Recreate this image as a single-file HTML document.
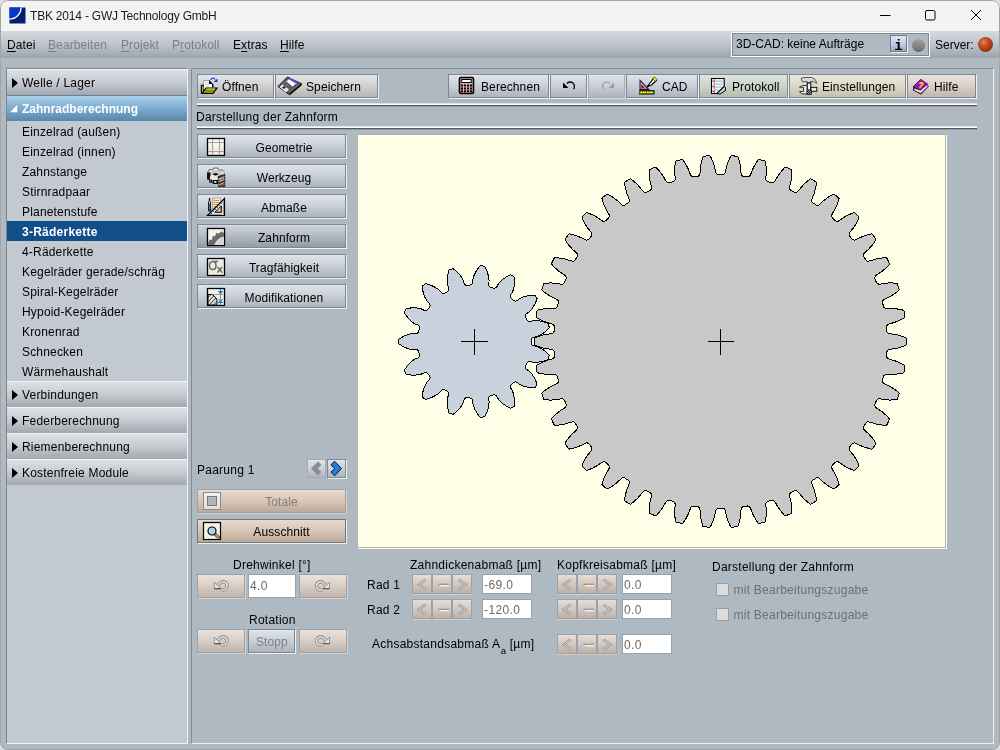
<!DOCTYPE html>
<html><head><meta charset="utf-8">
<style>
*{box-sizing:border-box;margin:0;padding:0}
html,body{width:1000px;height:750px;overflow:hidden;background:#dedede}
body{position:relative;font-family:"Liberation Sans",sans-serif;font-size:12px;color:#000}
.a{position:absolute}
#win{will-change:transform;position:absolute;left:0;top:0;width:1000px;height:750px;background:#afb9c2;border-radius:8px;overflow:hidden}
#frame{position:absolute;left:0;top:0;width:1000px;height:750px;border:1px solid #a4a4a4;border-radius:8px}
#title{position:absolute;left:0;top:0;width:1000px;height:31px;background:#f3f3f3}
#menu{position:absolute;left:0;top:31px;width:1000px;height:27px;background:linear-gradient(#d5dae0,#bdc4cb 50%,#9ca4ac)}
.mi{position:absolute;top:38px;font-size:12px;line-height:14px;letter-spacing:0.1px}
.dis{color:#7a7f86}
.u{text-decoration:underline;text-underline-offset:2px}
.etch{position:absolute}
.lp{position:absolute;left:6px;top:68px;width:182px;height:676px;background:#c3c9d1;border-left:1px solid #7d858e;border-top:1px solid #7d858e;border-right:1px solid #eef1f4;border-bottom:1px solid #eef1f4}
.hdr{position:absolute;left:7px;width:180px;height:26px;background:linear-gradient(#dde1e5,#c6cbd1 50%,#a2a7af);border-top:1px solid #f2f4f6}
.hdr .t{position:absolute;left:15px;top:6px;white-space:nowrap;letter-spacing:0.2px}
.tri{position:absolute;left:5px;top:8px;width:0;height:0;border-left:6px solid #000;border-top:5px solid transparent;border-bottom:5px solid transparent}
.item{position:absolute;left:22px;white-space:nowrap;letter-spacing:0.18px}
.mp{position:absolute;left:191px;top:68px;width:803px;height:676px;border-left:1px solid #838b94;border-top:1px solid #838b94;border-right:1px solid #eef1f4;border-bottom:1px solid #eef1f4}
.btn{position:absolute;border:1px solid #7f8892;box-shadow:1px 1px 0 #eef1f4;white-space:nowrap}
.bb{background:linear-gradient(#e8ebef 0,#dde2e8 1px,#c9cfd6 50%,#adb4bd)}
.bsel{background:linear-gradient(#dde1e6 0,#cbd1d8 1px,#b2b9c2 50%,#939ca6)}
.bg{background:linear-gradient(#e6e6e6,#d0d0d0 50%,#b5b5b5)}
.bgr{background:linear-gradient(#dfe5dd,#ccd3c9 50%,#b5bdb2)}
.by{background:linear-gradient(#ebebdc,#d9d9c6 50%,#c2c2ac)}
.bpe{background:linear-gradient(#ecdfd3 0,#e6d8cb 1px,#d8c6b7 50%,#bca897)}
.bp{background:linear-gradient(#ece3df,#dad0ca 50%,#c2b6ae)}
.bw{background:linear-gradient(#ebe3dc,#d9cec6 50%,#bfb3aa);border-color:#9aa3ad!important;box-shadow:1px 1px 0 #ddd2c8!important}
.bt{position:absolute;top:5px;white-space:nowrap;letter-spacing:0.1px}
.sep{position:absolute;height:4px;background:linear-gradient(#dfe3e7 0,#dfe3e7 1px,#fff 1px,#fff 2px,#55585c 2px,#55585c 3px,#959aa0 3px,#959aa0 4px)}
.field{position:absolute;background:#fff;border:1px solid #98a2ac;color:#6a6a6a;font-size:12px;padding-left:1px;line-height:20px;letter-spacing:0.4px}
.lbl{position:absolute;white-space:nowrap;letter-spacing:0.25px}
.sb{position:absolute;width:20px;height:20px;border:1px solid #9aa3ad;box-shadow:0 1px 0 #d8cdc3;background:linear-gradient(#e6ddd6,#d4c9c0 50%,#bdb1a7)}
.cb{position:absolute;width:13px;height:13px;background:#dcdcdc;border:1px solid #97a0a9}
</style></head><body>
<div id="win">
<!-- title bar -->
<div id="title">
 <svg class="a" style="left:8.5px;top:6.5px" width="17" height="17" viewBox="0 0 17 17">
  <rect x="0.5" y="0.5" width="16" height="16" fill="#00206e"/>
  <path d="M0.5 0.5 H12 A11.5 11.5 0 0 1 0.5 12 Z" fill="#0038c8"/>
  <path d="M12 0.5 A11.5 11.5 0 0 1 0.5 12" fill="none" stroke="#fff" stroke-width="1.4"/>
 </svg>
 <div class="a" style="left:30px;top:9px;font-size:12px;letter-spacing:-0.2px;color:#1a1a1a;white-space:nowrap">TBK 2014 - GWJ Technology GmbH</div>
 <svg class="a" style="left:870px;top:0" width="130" height="31" viewBox="0 0 130 31">
  <path d="M10 15.5 H20.5" stroke="#000" stroke-width="1"/>
  <rect x="55.5" y="10.5" width="9.5" height="9.5" rx="1.5" fill="none" stroke="#000" stroke-width="1"/>
  <path d="M101 10 L111 20 M111 10 L101 20" stroke="#000" stroke-width="1"/>
 </svg>
</div>
<!-- menu -->
<div id="menu"></div>
<div class="mi" style="left:7px"><span class="u">D</span>atei</div>
<div class="mi dis" style="left:48px"><span class="u">B</span>earbeiten</div>
<div class="mi dis" style="left:121px"><span class="u">P</span>rojekt</div>
<div class="mi dis" style="left:172px">P<span class="u">r</span>otokoll</div>
<div class="mi" style="left:233px">E<span class="u">x</span>tras</div>
<div class="mi" style="left:280px"><span class="u">H</span>ilfe</div>
<!-- status box -->
<div class="a" style="left:731px;top:32px;width:199px;height:25px;border:1px solid #fff"></div>
<div class="a" style="left:732px;top:33px;width:197px;height:23px;border:1px solid #7f8892;background:#afb9c2"></div>
<div class="a" style="left:736px;top:37px;white-space:nowrap">3D-CAD: keine Aufträge</div>
<div class="a" style="left:890px;top:35px;width:17px;height:17px;border:1px solid #6f7780;box-shadow:1px 1px 0 #eef1f4;background:linear-gradient(#e2e8f2,#c2cfe4 50%,#94a8cc)"></div>
<div class="a" style="left:892px;top:38.5px;width:13px;text-align:center;font-family:'Liberation Mono',monospace;font-weight:bold;font-size:14px;line-height:14px">i</div>
<div class="a" style="left:911.5px;top:38.5px;width:13px;height:13px;border-radius:50%;background:linear-gradient(#a2a2a2,#878787 50%,#666)"></div>
<div class="a" style="left:935px;top:38px;white-space:nowrap">Server:</div>
<div class="a" style="left:977.5px;top:36.5px;width:15px;height:15px;border-radius:50%;background:radial-gradient(circle at 38% 35%,#d98a6a 0,#c8502a 30%,#a8380f 60%,#7c2407 100%)"></div>

<!-- left panel -->
<div class="lp"></div>
<div class="hdr" style="top:69px"><div class="tri"></div><div class="t">Welle / Lager</div></div>
<div class="a" style="left:7px;top:95px;width:180px;height:26px;border-top:1px solid #64838f;background:linear-gradient(#a9d0e9,#7caccf 50%,#5787ab)"></div>
<svg class="a" style="left:10px;top:105px" width="8" height="8"><path d="M0 7.2 L7.2 7.2 L7.2 0 Z" fill="#fff"/></svg>
<div class="a" style="left:22px;top:102px;color:#fff;font-weight:bold;white-space:nowrap">Zahnradberechnung</div>
<div class="item" style="top:125px">Einzelrad (außen)</div>
<div class="item" style="top:145px">Einzelrad (innen)</div>
<div class="item" style="top:165px">Zahnstange</div>
<div class="item" style="top:185px">Stirnradpaar</div>
<div class="item" style="top:205px">Planetenstufe</div>
<div class="a" style="left:7px;top:221px;width:180px;height:20px;background:#114e8a"></div>
<div class="item" style="top:225px;color:#fff;font-weight:bold;letter-spacing:0.25px">3-Räderkette</div>
<div class="item" style="top:245px">4-Räderkette</div>
<div class="item" style="top:265px">Kegelräder gerade/schräg</div>
<div class="item" style="top:285px">Spiral-Kegelräder</div>
<div class="item" style="top:305px">Hypoid-Kegelräder</div>
<div class="item" style="top:325px">Kronenrad</div>
<div class="item" style="top:345px">Schnecken</div>
<div class="item" style="top:365px">Wärmehaushalt</div>
<div class="hdr" style="top:381px"><div class="tri"></div><div class="t">Verbindungen</div></div>
<div class="hdr" style="top:407px"><div class="tri"></div><div class="t">Federberechnung</div></div>
<div class="hdr" style="top:433px"><div class="tri"></div><div class="t">Riemenberechnung</div></div>
<div class="hdr" style="top:459px"><div class="tri"></div><div class="t">Kostenfreie Module</div></div>

<!-- main panel -->
<div class="mp"></div>
<!-- toolbar -->
<div class="btn bg" style="left:197px;top:74px;width:77px;height:24px"><div class="bt" style="left:24px">Öffnen</div></div>
<div class="btn bg" style="left:275px;top:74px;width:103px;height:24px"><div class="bt" style="left:30px">Speichern</div></div>
<div class="btn bb" style="left:448px;top:74px;width:101px;height:24px"><div class="bt" style="left:32px">Berechnen</div></div>
<div class="btn bb" style="left:550px;top:74px;width:37px;height:24px"></div>
<div class="btn bb" style="left:588px;top:74px;width:37px;height:24px;border-color:#a3acb5;box-shadow:1px 1px 0 #d9dee3"></div>
<div class="btn bb" style="left:626px;top:74px;width:72px;height:24px"><div class="bt" style="left:35px">CAD</div></div>
<div class="btn bgr" style="left:699px;top:74px;width:89px;height:24px"><div class="bt" style="left:32px">Protokoll</div></div>
<div class="btn by" style="left:789px;top:74px;width:117px;height:24px"><div class="bt" style="left:32px">Einstellungen</div></div>
<div class="btn bp" style="left:907px;top:74px;width:69px;height:24px"><div class="bt" style="left:26px">Hilfe</div></div>
<!-- toolbar icons -->
<svg class="a" style="left:198px;top:75px" width="24" height="24" viewBox="0 0 24 24">
 <path d="M5.5 5.5 H11.5 L14.5 8.5 V14.5 H5.5 Z" fill="#fff" stroke="#a0a0a0"/>
 <path d="M11 5 L15.5 9.5 V12 H14 V9 H11 Z" fill="#000"/>
 <path d="M7 7.5 H10.5 M7 9.5 H11 M7 11.5 H11" stroke="#c8c8c8"/>
 <path d="M2.8 9.8 H6 V18.5 H2.8 Z" fill="#000"/>
 <path d="M4.8 10.8 V17.8" stroke="#e6e670" stroke-width="1.1"/>
 <path d="M4 18.5 L8 13 H19 L15 18.5 Z" fill="#8f8f0a" stroke="#000" stroke-width="1.2"/>
 <path d="M8.5 14 H17" stroke="#d9d95a"/>
 <path d="M12.5 5 Q15 1.5 17.5 4.5" stroke="#2a3ae0" stroke-width="1.1" fill="none"/>
 <path d="M15.5 7 L19.5 3.5 V7 Z" fill="#1030f0"/>
</svg>
<svg class="a" style="left:276px;top:75px" width="28" height="24" viewBox="0 0 28 24">
 <path d="M2 11.5 L11.5 2 L26 9 L13.5 19.8 Z" fill="#5c5c5c" stroke="#1a0f22" stroke-width="1"/>
 <path d="M4.5 11.5 L11.5 4.5 M7 14 L14 7 M14 17 L23 9.5" stroke="#9a9a9a" stroke-width="0.8" stroke-dasharray="1 1"/>
 <path d="M10.5 6.5 L14 3.3 L21.5 7.2 L16.5 11.5 Z" fill="#fff"/>
 <path d="M13 4.2 L14 3.3 L21.5 7.2 L20 8.4 Z" fill="#3040f0"/>
 <path d="M3.5 12 L6.5 9.5 L13 14.5 L10 17.5 Z" fill="#e8e8e8"/>
 <path d="M6 12.5 L8 11 L10 12.5 L8 14 Z" fill="#222"/>
 <path d="M14 19 L25.5 9.5" stroke="#000" stroke-width="1.6"/>
</svg>
<svg class="a" style="left:452px;top:75px" width="28" height="24" viewBox="0 0 28 24">
 <rect x="7.5" y="2.5" width="14" height="16" rx="1.5" fill="#d9aab0" stroke="#000" stroke-width="1.6"/>
 <rect x="9.8" y="4.5" width="9.4" height="3" fill="#fff" stroke="#000" stroke-width="1"/>
 <g fill="#000">
  <rect x="9" y="9.5" width="2" height="2"/><rect x="12" y="9.5" width="2" height="2"/><rect x="15" y="9.5" width="2" height="2"/><rect x="18" y="9.5" width="2" height="2"/>
  <rect x="9" y="12.5" width="2" height="2"/><rect x="12" y="12.5" width="2" height="2"/><rect x="15" y="12.5" width="2" height="2"/><rect x="18" y="12.5" width="2" height="2"/>
  <rect x="9" y="15.3" width="2" height="2"/><rect x="12" y="15.3" width="2" height="2"/><rect x="15" y="15.3" width="2" height="2"/><rect x="18" y="15.3" width="2" height="2"/>
 </g>
</svg>
<svg class="a" style="left:550px;top:74px" width="76" height="25" viewBox="550 74 76 25">
 <path d="M573.5 89 A4.2 4.2 0 1 0 566.8 83.6" fill="none" stroke="#000" stroke-width="1.3"/>
 <path d="M563 82.6 V88 H568.4 Z" fill="#000"/>
 <path d="M603.5 89 A4.2 4.2 0 1 1 610.2 83.6" fill="none" stroke="#9c9c9c" stroke-width="1.2"/>
 <path d="M614 82.6 V88 H608.6 Z" fill="#9c9c9c"/>
</svg>
<svg class="a" style="left:630px;top:75px" width="30" height="24" viewBox="0 0 30 24">
 <path d="M9.5 4 V15 H20 Z" fill="#0a0a9a"/>
 <path d="M10.5 6.5 V13.7 H17.5 Z" fill="#f7a21b"/>
 <path d="M11.5 9.5 V12.7 H14.5 Z" fill="#0a0a9a"/>
 <rect x="9" y="15.2" width="15.5" height="4.3" fill="#000"/>
 <rect x="9.5" y="16.2" width="14" height="2.2" fill="#f0f000"/>
 <path d="M10.5 16.2 V17 M12.5 16.2 V17 M14.5 16.2 V17 M16.5 16.2 V17.5 M18.5 16.2 V17 M20.5 16.2 V17 M22.5 16.2 V17" stroke="#000" stroke-width="0.7"/>
 <path d="M17.5 11.5 L20 8 L24 3 L26.5 5.5 L21.5 10 Z" fill="#fff" stroke="#000" stroke-width="1.2"/>
 <path d="M22.5 3.5 L24.5 2 L27 4.5 L25.5 6.5 Z" fill="#f0f000" stroke="#222" stroke-width="0.6"/>
 <path d="M17.2 11.8 L19 10.8 L18.2 10 Z" fill="#000" stroke="#000"/>
</svg>
<svg class="a" style="left:705px;top:75px" width="30" height="24" viewBox="0 0 30 24">
 <path d="M6.5 3.5 H19.2 V11.5 L12 18.5 H6.5 Z" fill="#f4eeee" stroke="#000" stroke-width="1.1"/>
 <path d="M8 6.2 H19 M8 9.2 H19 M8 12.2 H17 M8 15.2 H14" stroke="#8fc6e8" stroke-width="1"/>
 <path d="M9.5 4 V18" stroke="#f07c7c" stroke-width="1"/>
 <path d="M8.2 5.5 V6.5 M8.2 11 V12 M8.2 16 V17" stroke="#000" stroke-width="1"/>
 <path d="M12 18.5 L19.5 11.5 L20.5 13 V15.5 L15 19 Z" fill="#d0d0d0" stroke="#000" stroke-width="1"/>
</svg>
<svg class="a" style="left:795px;top:75px" width="30" height="24" viewBox="0 0 30 24">
 <path d="M6 3.5 Q8 2 11 2.5 H16.5 Q20 3 22 7.5 L21.5 8.5 Q19.5 6.5 17 6.5 H15.5 V8 H12 V6.5 Q9 6.5 7.5 7 Z" fill="#d8d8d8" stroke="#333" stroke-width="0.8"/>
 <rect x="12.2" y="8" width="3.6" height="11" fill="#f4f4f4" stroke="#000" stroke-width="1"/>
 <path d="M4.5 12.3 Q7 10 10 10.5 H12 V19 H9 Q6 19.5 4.5 16.5 H8.5 V12.3 Z" fill="#e6e6e6" stroke="#111" stroke-width="0.8"/>
 <rect x="15.8" y="12.3" width="6" height="4" fill="#e8e8e8" stroke="#000" stroke-width="0.9"/>
 <rect x="11.8" y="14.5" width="5" height="5" fill="#000"/>
 <path d="M12.3 15 h1 v1 h-1z M14.3 15 h1 v1 h-1z M13.3 16 h1 v1 h-1z M15.3 16 h1 v1 h-1z M12.3 17 h1 v1 h-1z M14.3 17 h1 v1 h-1z M13.3 18 h1 v1 h-1z M15.3 18 h1 v1 h-1z" fill="#bbb"/>
</svg>
<svg class="a" style="left:908px;top:75px" width="30" height="24" viewBox="0 0 30 24">
 <path d="M5.2 11.3 L12.8 4 L19.5 8.8 L20.5 11.8 L13 19.5 L5.2 15.5 Z" fill="#000"/>
 <path d="M5.5 11.5 L12.8 4.3 L19.2 8.3 L12 15.2 Z" fill="#9a14b4"/>
 <path d="M6.2 13.2 L12 15.5 L19.5 9.5 L19.8 11.5 L12.7 18.3 L6.3 15.3 Z" fill="#e6e6e6"/>
 <path d="M12.3 15.5 L19.5 9 L20 12 L13 18.8" fill="none" stroke="#9a14b4" stroke-width="0.8"/>
 <path d="M11.5 8.8 Q12.5 7.5 14.3 8 Q15.7 8.8 14.2 10.2 L13 10.8 L12.4 11.6" fill="none" stroke="#f2e600" stroke-width="1.5"/>
 <rect x="11.2" y="11.8" width="1.6" height="1.4" fill="#f2e600"/>
</svg>
<div class="sep" style="left:197px;top:103px;width:780px"></div>
<div class="lbl" style="left:196px;top:110px">Darstellung der Zahnform</div>
<div class="sep" style="left:197px;top:126px;width:780px"></div>

<!-- side buttons -->
<div class="btn bb" style="left:197px;top:134px;width:149px;height:24px"><div class="bt" style="left:0;top:6px;width:147px;padding-left:25px;text-align:center">Geometrie</div></div>
<div class="btn bb" style="left:197px;top:164px;width:149px;height:24px"><div class="bt" style="left:0;top:6px;width:147px;padding-left:25px;text-align:center">Werkzeug</div></div>
<div class="btn bb" style="left:197px;top:194px;width:149px;height:24px"><div class="bt" style="left:0;top:6px;width:147px;padding-left:25px;text-align:center">Abmaße</div></div>
<div class="btn bsel" style="left:197px;top:224px;width:149px;height:24px"><div class="bt" style="left:0;top:6px;width:147px;padding-left:25px;text-align:center">Zahnform</div></div>
<div class="btn bb" style="left:197px;top:254px;width:149px;height:24px"><div class="bt" style="left:0;top:6px;width:147px;padding-left:25px;text-align:center">Tragfähigkeit</div></div>
<div class="btn bb" style="left:197px;top:284px;width:149px;height:24px"><div class="bt" style="left:0;top:6px;width:147px;padding-left:25px;text-align:center">Modifikationen</div></div>

<!-- side icons -->
<svg class="a" style="left:204px;top:134px" width="24" height="180" viewBox="204 134 24 180">
 <defs>
  <linearGradient id="cr" x1="0" y1="0" x2="0" y2="1"><stop offset="0" stop-color="#fbfbf0"/><stop offset="1" stop-color="#e6e6da"/></linearGradient>
  <pattern id="hatch" width="3" height="3" patternUnits="userSpaceOnUse" patternTransform="rotate(45)"><rect width="3" height="3" fill="#ecebe0"/><rect width="1" height="3" fill="#555"/></pattern>
 </defs>
 <!-- Geometrie -->
 <rect x="207.5" y="138.5" width="17" height="17" fill="url(#cr)" stroke="#000" stroke-width="1.3"/>
 <path d="M212.5 139 V155 M219.5 139 V155 M208 142.5 H224 M208 151.5 H224" stroke="#b09ca0" stroke-width="1"/>
 <!-- Werkzeug -->
 <path d="M207.5 173 L209 169.5 L213 169.5 L213.5 168 L218 168 L218.5 169.5 L220 170.5 L222 169.5 L224 171.5 L224.5 175 L218 177 L211 181 L207.5 179 Z" fill="#c8c8c8" stroke="#6a6a6a" stroke-width="0.9"/>
 <path d="M209.5 171 H212.5 M214 169.5 H217.5" stroke="#f0f0f0" stroke-width="1"/>
 <path d="M207 172.5 H210.5 V179.5 H207 Z" fill="#111"/>
 <path d="M210 176 Q214 174 218.5 175.5 V180.5 H210 Z" fill="#efe9dc"/>
 <ellipse cx="215.6" cy="174.3" rx="2.6" ry="1.1" fill="#000"/>
 <rect x="212.5" y="180" width="5.5" height="4" rx="1" fill="#000"/>
 <rect x="214" y="181" width="2.5" height="2" fill="#9fd2e6"/>
 <rect x="209.3" y="179.5" width="2.8" height="3.2" fill="#000"/>
 <rect x="210.2" y="180.5" width="1" height="1" fill="#e8e8e8"/>
 <path d="M220.5 170.5 L224.5 171.5 V174.5 L221 174 Z" fill="#b8dceb"/>
 <path d="M218 176.5 L224.8 174.5 V186.5 H218.5 Z" fill="#1c2c90" stroke="#000" stroke-width="0.6"/>
 <path d="M218.3 179 L224.5 176.5 M218.3 182 L224.5 179.5 M218.5 185 L224.5 182.5" stroke="#f2b428" stroke-width="1.3"/>
 <path d="M219 180.2 L224 178.2" stroke="#f4f4f4" stroke-width="0.7"/>
 <path d="M220.5 186 L224.5 184.3" stroke="#e84a10" stroke-width="1.2"/>
 <!-- Abmasse -->
 <rect x="212.5" y="198" width="8" height="14" fill="#f3eedc" stroke="#c8a0a0" stroke-width="1"/>
 <path d="M213.5 200.5 H219 M213.5 202.5 H219 M213.5 204.5 H219 M213.5 206.5 H219 M213.5 208.5 H219 M213.5 210.5 H219" stroke="#b87858" stroke-width="0.8"/>
 <path d="M214.3 199 V211" stroke="#f0c040" stroke-width="1"/>
 <path d="M208.5 201.5 H210.5 V211 H208.5 Z" fill="#1a78d0" stroke="#000" stroke-width="0.8"/>
 <path d="M209.5 198 V201" stroke="#000" stroke-width="1.2"/><rect x="209" y="201" width="1.2" height="2.5" fill="#f0c040"/>
 <path d="M207.5 215.5 L224.5 198.5 V215.5 Z M215 212.3 H221.3 V206 Z" fill="#e6e4d8" fill-rule="evenodd"/>
 <path d="M211 214 L223.2 201.8" stroke="#000" stroke-width="1" stroke-dasharray="1 1.8"/>
 <path d="M215 212.3 H221.3 V206 Z" fill="none" stroke="#000" stroke-width="1"/>
 <path d="M207.5 215.5 L224.5 198.5 V215.5 Z" fill="none" stroke="#000" stroke-width="1.2"/>
 <path d="M209 215.5 V214.3 M211 215.5 V214.3 M213 215.5 V214.3 M215 215.5 V214.3 M217 215.5 V214.3 M219 215.5 V214.3 M221 215.5 V214.3 M224.5 213 H223.3 M224.5 211 H223.3 M224.5 209 H223.3 M224.5 207 H223.3 M224.5 205 H223.3 M224.5 203 H223.3" stroke="#000" stroke-width="0.9"/>
 <!-- Zahnform -->
 <rect x="207.5" y="228.5" width="17" height="17" fill="#f5f5ec" stroke="#000" stroke-width="1.3"/>
 <path d="M208.2 245 V242.5 L209.8 239.5 L211.8 240 L212.8 235.8 L214.8 236.5 L216.5 232.8 L218.5 233.8 L221.5 231 L222.5 232.8 L224 232.2 V236.8 Q217.5 237.5 214.5 245 Z" fill="#6a6a6a"/>
 <path d="M214.5 245 Q217.5 237.5 224 236.8 V245 Z" fill="#d3d6dc"/>
 <!-- Tragfaehigkeit -->
 <rect x="207.5" y="258.5" width="17" height="17" fill="#ecebe0" stroke="#000" stroke-width="1.3"/>
 <path d="M218 261.5 H213 Q209.5 262 209.5 265.5 Q209.5 269.5 213 269.5 Q216 269.5 216 265.5 Q216 262 213.5 261.5" fill="none" stroke="#666" stroke-width="1.4"/>
 <path d="M217.5 267 L222 272.5 M222 267 L217.5 272.5" stroke="#666" stroke-width="1.4"/>
 <!-- Modifikationen -->
 <rect x="207.5" y="288.5" width="17" height="17" fill="#f3f3e6" stroke="#000" stroke-width="1.3"/>
 <path d="M208 294.5 H211.5 Q213 294.5 214 296 L216 298 Q217 299 217 300.5 V305 H208 Z" fill="url(#hatch)" stroke="#000" stroke-width="1"/>
 <path d="M213 294.5 H223 M217 299.5 H223 M220.5 294.5 V299.5" stroke="#8a8a8a" stroke-width="0.8"/>
 <path d="M220.5 289 V294 M218.5 291.5 L220.5 294 L222.5 291.5 Z M220.5 305 V300 M218.5 302.5 L220.5 300 L222.5 302.5 Z" stroke="#1a80e0" fill="#1a80e0" stroke-width="1"/>
</svg>
<div class="lbl" style="left:197px;top:463px">Paarung 1</div>
<div class="btn bb" style="left:307px;top:459px;width:19px;height:19px;border-color:#a3acb5;box-shadow:none"></div>
<div class="btn bb" style="left:327px;top:459px;width:19px;height:19px"></div>
<div class="btn bpe" style="left:197px;top:489px;width:149px;height:24px;border-color:#9aa3ad;box-shadow:1px 1px 0 #e3cebd"><div class="bt" style="left:0;width:147px;padding-left:20px;text-align:center;color:#808080">Totale</div></div>
<div class="btn bpe" style="left:197px;top:519px;width:149px;height:24px;border-color:#6f7780"><div class="bt" style="left:0;width:147px;padding-left:20px;text-align:center">Ausschnitt</div></div>

<svg class="a" style="left:300px;top:454px" width="50" height="30" viewBox="300 454 50 30">
 <path d="M311 468.5 L318 461.5 L321.5 465 L317.8 468.5 L321.5 472 L318 475.5 Z" fill="#8c8c8c"/>
 <path d="M331 464.8 L334.6 461.2 L341.5 468.5 L334.6 475.8 L331 472.2 L334.8 468.5 Z" fill="#1f7ee0" stroke="#000" stroke-width="0.9"/>
</svg>
<svg class="a" style="left:200px;top:488px" width="26" height="56" viewBox="200 488 26 56">
 <defs><linearGradient id="wg" x1="0" y1="0" x2="0" y2="1"><stop offset="0" stop-color="#f2f2f2"/><stop offset="1" stop-color="#e0e0e0"/></linearGradient></defs>
 <rect x="203.5" y="492.5" width="17" height="17" fill="url(#wg)" stroke="#8a8a8a" stroke-width="1"/>
 <rect x="207.5" y="496.5" width="9" height="9" fill="#b4b4b4" stroke="#7a7a7a" stroke-width="1"/>
 <rect x="203.5" y="522.5" width="17" height="17" fill="#f2f2e4" stroke="#000" stroke-width="1.2"/>
 <path d="M215 534 L219.3 538.3" stroke="#000" stroke-width="2.8"/>
 <path d="M215.4 534.4 L219.2 538.2" stroke="#f2b070" stroke-width="1.5"/>
 <circle cx="212" cy="531" r="4" fill="#a8d0f0" stroke="#000" stroke-width="1.2"/>
</svg>
<!-- canvas -->
<div class="a" style="left:357px;top:134px;width:589px;height:414px;border:1px solid #b5b59b;box-shadow:1px 1px 0 #fff;background:#fffee6"></div>
<div class="a" style="left:358px;top:135px;width:1px;height:412px;background:#fff"></div>
<div class="a" style="left:358px;top:135px;width:587px;height:1px;background:#fff"></div>
<svg class="a" style="left:0;top:0" width="1000" height="750" viewBox="0 0 1000 750" shape-rendering="crispEdges">
 <path d="M535.41 345.45 L534.75 344.94 L534.47 344.15 L534.47 338.85 L534.60 338.32 L534.92 337.87 L535.37 337.56 L538.05 336.55 L542.69 335.11 L546.59 334.26 L550.97 333.71 L552.66 333.19 L553.55 332.44 L554.09 331.41 L554.47 327.21 L554.39 326.39 L554.07 325.59 L553.56 324.94 L552.87 324.43 L551.28 323.79 L547.17 322.65 L544.20 321.52 L540.21 319.65 L536.62 317.62 L536.25 317.08 L536.15 316.43 L537.08 310.77 L537.47 310.29 L538.03 310.02 L544.25 308.85 L549.05 308.43 L554.16 308.53 L555.84 308.24 L556.77 307.64 L557.46 306.70 L558.48 302.46 L558.48 301.65 L558.26 300.88 L557.85 300.19 L557.28 299.63 L555.81 298.77 L551.92 297.03 L549.14 295.47 L545.48 293.02 L542.23 290.48 L541.95 289.89 L541.94 289.24 L543.56 284.03 L544.01 283.47 L544.68 283.18 L550.31 282.94 L554.80 283.14 L560.69 284.08 L562.65 284.06 L563.71 283.58 L564.49 282.74 L566.16 278.53 L566.09 277.03 L565.32 275.75 L564.02 274.70 L560.46 272.42 L557.96 270.47 L554.75 267.57 L551.85 264.51 L551.64 263.89 L551.71 263.24 L554.01 258.46 L554.54 257.87 L555.30 257.63 L560.62 258.18 L565.63 259.16 L570.84 260.84 L572.53 261.18 L573.33 261.13 L574.14 260.83 L574.79 260.36 L575.29 259.73 L577.33 256.04 L577.45 254.94 L577.13 253.81 L576.03 252.43 L572.75 249.54 L570.06 246.70 L567.14 243.05 L565.14 240.03 L565.10 239.45 L565.30 238.90 L568.24 234.57 L568.70 234.15 L569.21 233.96 L569.79 233.97 L576.13 235.70 L580.45 237.35 L584.92 239.61 L586.64 240.09 L587.81 239.91 L588.81 239.31 L591.34 236.20 L591.76 235.44 L591.94 234.09 L591.51 232.78 L590.61 231.48 L588.04 228.46 L586.25 225.92 L584.11 222.38 L582.12 218.47 L581.99 217.86 L582.11 217.25 L583.32 215.81 L586.04 212.93 L586.67 212.64 L587.33 212.65 L591.35 214.32 L595.13 216.21 L597.85 217.84 L601.09 220.20 L602.46 221.00 L603.79 221.33 L605.13 221.04 L605.84 220.57 L608.77 217.80 L609.29 216.76 L609.37 215.60 L608.77 213.93 L606.18 209.62 L604.20 205.44 L602.01 199.25 L601.95 198.71 L602.11 198.14 L602.49 197.66 L606.58 194.40 L607.12 194.17 L607.70 194.15 L610.86 195.92 L614.72 198.56 L617.75 201.04 L620.88 204.10 L622.35 205.09 L623.49 205.32 L624.63 205.10 L628.11 202.81 L628.70 202.26 L629.12 201.58 L629.35 200.75 L629.35 199.95 L628.88 198.26 L626.83 193.26 L625.49 188.41 L624.52 183.03 L624.70 182.25 L625.22 181.70 L629.85 179.03 L630.49 178.91 L631.13 179.07 L634.39 181.73 L637.52 184.72 L639.65 187.07 L642.19 190.44 L643.34 191.66 L644.67 192.34 L646.19 192.29 L650.25 190.32 L651.03 189.46 L651.43 188.38 L651.29 186.42 L649.92 180.66 L649.39 176.25 L649.21 170.53 L649.42 169.88 L649.94 169.36 L655.04 167.35 L655.69 167.30 L656.30 167.54 L659.10 170.61 L661.79 174.06 L663.55 176.71 L665.58 180.47 L666.56 181.87 L667.21 182.44 L668.01 182.80 L668.88 182.91 L669.69 182.79 L673.68 181.48 L674.55 180.70 L675.05 179.71 L675.18 177.94 L674.74 173.59 L674.70 169.68 L675.04 165.02 L675.63 161.44 L676.00 160.99 L676.52 160.72 L682.16 159.54 L682.71 159.74 L683.14 160.14 L686.58 165.65 L688.66 169.86 L690.42 174.59 L691.30 176.06 L692.25 176.75 L693.33 177.01 L697.63 176.42 L698.38 176.13 L699.03 175.65 L699.53 175.02 L699.84 174.26 L700.11 172.58 L700.31 168.36 L700.74 165.22 L701.65 160.99 L702.84 156.95 L703.28 156.46 L703.88 156.20 L709.24 155.79 L709.98 155.98 L710.54 156.50 L712.81 161.60 L714.41 166.33 L715.51 171.51 L716.04 173.14 L716.96 174.26 L718.29 174.83 L722.80 174.81 L723.87 174.38 L724.70 173.57 L725.43 171.75 L726.70 165.97 L728.13 161.76 L730.45 156.53 L730.95 156.01 L731.61 155.80 L737.08 156.19 L737.69 156.44 L738.14 156.92 L739.33 160.89 L740.25 165.17 L740.69 168.32 L740.89 172.59 L741.17 174.28 L741.51 175.07 L742.07 175.74 L742.80 176.22 L743.58 176.46 L747.75 177.01 L748.82 176.71 L749.75 176.01 L750.64 174.48 L752.13 170.37 L753.79 166.82 L756.12 162.77 L758.20 159.80 L758.73 159.56 L759.31 159.54 L764.91 160.93 L765.32 161.35 L765.53 161.89 L766.24 168.40 L766.28 173.08 L765.81 178.05 L765.96 179.73 L766.50 180.76 L767.37 181.50 L771.52 182.84 L772.33 182.91 L773.12 182.76 L773.84 182.40 L774.45 181.86 L775.42 180.46 L777.43 176.75 L779.12 174.18 L781.68 170.88 L784.55 167.66 L785.13 167.34 L785.78 167.31 L788.52 168.32 L791.13 169.40 L791.58 169.88 L791.79 170.50 L791.70 174.84 L791.33 178.97 L790.83 182.00 L789.78 186.08 L789.54 187.78 L789.61 188.60 L789.90 189.35 L790.38 189.99 L791.01 190.49 L794.95 192.33 L796.06 192.39 L797.16 192.02 L798.46 190.86 L801.52 186.87 L804.74 183.46 L809.66 179.21 L810.18 178.96 L810.77 178.92 L815.81 181.72 L816.23 182.13 L816.45 182.67 L815.96 186.26 L814.91 190.81 L813.72 194.54 L812.01 198.57 L811.62 200.30 L811.81 201.39 L812.41 202.39 L815.84 204.82 L816.58 205.17 L817.42 205.32 L818.29 205.21 L819.05 204.89 L820.42 203.83 L823.52 200.79 L825.96 198.81 L829.57 196.29 L833.12 194.20 L833.77 194.15 L834.39 194.38 L838.67 197.81 L839.01 198.45 L839.02 199.14 L837.16 204.55 L835.35 208.61 L832.35 213.70 L831.64 215.54 L831.70 216.71 L832.19 217.74 L835.49 220.82 L836.85 221.32 L838.29 221.11 L839.79 220.28 L844.11 217.24 L848.50 214.86 L853.64 212.66 L854.40 212.65 L855.07 213.02 L858.72 216.97 L858.98 217.57 L858.97 218.22 L857.10 221.99 L854.89 225.72 L853.07 228.31 L850.35 231.53 L849.40 232.96 L849.11 233.73 L849.05 234.53 L849.19 235.32 L849.55 236.04 L852.30 239.41 L853.27 239.94 L854.43 240.09 L856.10 239.60 L860.59 237.33 L864.97 235.66 L871.24 233.96 L871.83 233.96 L872.37 234.19 L875.70 238.90 L875.90 239.45 L875.86 240.03 L873.86 243.05 L870.94 246.70 L868.25 249.54 L864.96 252.43 L863.86 253.82 L863.55 254.88 L863.67 256.04 L865.70 259.72 L866.21 260.36 L866.93 260.87 L867.74 261.14 L868.56 261.18 L870.26 260.82 L874.37 259.43 L877.43 258.69 L881.77 257.99 L885.88 257.65 L886.49 257.89 L886.94 258.36 L889.31 263.31 L889.34 264.04 L889.05 264.67 L885.03 268.73 L881.63 271.60 L876.71 274.89 L875.28 276.24 L874.84 277.30 L874.83 278.46 L876.46 282.67 L877.54 283.74 L878.98 284.14 L880.65 284.03 L884.80 283.29 L887.96 283.01 L892.29 282.96 L896.49 283.22 L897.07 283.53 L897.46 284.06 L899.04 289.16 L899.03 289.96 L898.64 290.62 L894.28 293.90 L889.99 296.54 L885.07 298.83 L883.60 299.73 L883.05 300.32 L882.68 301.03 L882.50 301.87 L882.56 302.67 L883.58 306.77 L884.24 307.66 L885.24 308.26 L886.99 308.53 L891.36 308.42 L895.26 308.67 L899.88 309.36 L903.41 310.21 L903.83 310.62 L904.06 311.15 L904.84 316.32 L904.80 316.94 L904.55 317.43 L904.11 317.82 L898.25 320.89 L893.97 322.60 L889.20 323.97 L887.64 324.76 L886.90 325.66 L886.54 326.82 L886.80 330.83 L887.01 331.69 L887.81 332.81 L889.05 333.47 L896.79 334.73 L900.22 335.65 L903.83 336.87 L905.94 337.75 L906.37 338.25 L906.53 338.92 L906.53 344.22 L906.31 344.84 L905.85 345.31 L901.92 346.81 L897.76 348.03 L894.67 348.70 L890.48 349.21 L888.85 349.59 L887.59 350.41 L886.87 351.75 L886.55 356.25 L886.91 357.36 L887.64 358.24 L889.41 359.11 L895.08 360.80 L899.16 362.54 L904.21 365.24 L904.69 365.79 L904.86 366.46 L904.05 371.88 L903.76 372.47 L903.25 372.88 L899.19 373.77 L894.86 374.37 L891.69 374.57 L887.42 374.46 L885.71 374.60 L884.90 374.88 L884.19 375.39 L883.65 376.09 L883.35 376.85 L882.50 380.96 L882.73 382.11 L883.34 383.03 L884.80 384.03 L888.79 385.83 L892.20 387.75 L896.07 390.37 L898.87 392.67 L899.07 393.22 L899.05 393.80 L897.25 399.28 L896.80 399.65 L896.24 399.83 L889.70 400.05 L885.03 399.74 L880.10 398.90 L878.42 398.92 L877.37 399.37 L876.55 400.20 L874.90 404.24 L874.78 405.03 L874.87 405.83 L875.17 406.58 L875.66 407.23 L876.98 408.30 L880.54 410.58 L883.04 412.53 L886.25 415.43 L889.15 418.49 L889.36 419.11 L889.29 419.76 L886.98 424.57 L886.46 425.13 L885.70 425.37 L880.26 424.80 L875.33 423.83 L870.16 422.16 L868.47 421.82 L867.67 421.87 L866.91 422.14 L866.21 422.64 L865.71 423.27 L863.67 426.96 L863.55 428.12 L863.87 429.19 L864.97 430.57 L868.25 433.46 L870.94 436.30 L873.86 439.95 L875.86 442.97 L875.90 443.55 L875.70 444.10 L872.76 448.43 L872.30 448.85 L871.79 449.04 L871.21 449.03 L864.82 447.29 L860.52 445.63 L856.09 443.39 L854.41 442.91 L853.25 443.06 L852.20 443.68 L849.66 446.80 L849.24 447.55 L849.06 448.91 L849.49 450.20 L850.39 451.52 L852.98 454.57 L854.80 457.16 L856.96 460.76 L858.93 464.64 L859.01 465.29 L858.80 465.91 L856.86 468.08 L854.90 470.12 L854.26 470.37 L853.60 470.33 L849.54 468.63 L845.83 466.76 L843.15 465.16 L839.91 462.80 L838.54 462.00 L837.21 461.67 L835.87 461.96 L835.16 462.43 L832.23 465.20 L831.71 466.24 L831.63 467.40 L832.23 469.07 L834.82 473.38 L836.80 477.56 L838.99 483.75 L839.05 484.29 L838.89 484.86 L838.51 485.34 L834.42 488.60 L833.88 488.83 L833.30 488.85 L830.14 487.08 L826.28 484.44 L823.25 481.96 L820.13 478.91 L818.65 477.91 L817.51 477.68 L816.42 477.88 L812.89 480.19 L812.30 480.74 L811.88 481.42 L811.66 482.19 L811.65 483.05 L812.12 484.74 L814.17 489.74 L815.51 494.59 L816.48 499.97 L816.32 500.71 L815.78 501.30 L811.15 503.97 L810.51 504.09 L809.87 503.93 L806.61 501.27 L803.48 498.28 L801.35 495.93 L798.81 492.56 L797.66 491.34 L796.33 490.66 L794.81 490.71 L790.75 492.68 L789.98 493.53 L789.57 494.62 L789.71 496.58 L791.08 502.34 L791.61 506.75 L791.79 512.47 L791.58 513.12 L791.06 513.64 L785.96 515.65 L785.31 515.70 L784.70 515.46 L781.90 512.39 L779.21 508.94 L777.45 506.29 L775.42 502.53 L774.44 501.13 L773.79 500.56 L772.99 500.20 L772.12 500.09 L771.31 500.21 L767.32 501.52 L766.45 502.30 L765.95 503.29 L765.82 505.06 L766.26 509.41 L766.30 513.32 L765.96 517.98 L765.37 521.56 L765.00 522.01 L764.48 522.28 L758.84 523.46 L758.29 523.26 L757.86 522.86 L754.39 517.30 L752.33 513.11 L750.59 508.42 L749.73 506.97 L748.80 506.28 L747.69 505.99 L743.37 506.58 L742.62 506.87 L741.97 507.35 L741.47 507.98 L741.16 508.74 L740.89 510.42 L740.69 514.64 L740.26 517.78 L739.35 522.01 L738.16 526.05 L737.72 526.54 L737.12 526.80 L731.76 527.21 L731.02 527.02 L730.46 526.50 L728.19 521.40 L726.59 516.67 L725.49 511.49 L724.96 509.88 L724.23 508.89 L723.15 508.28 L722.29 508.14 L718.29 508.17 L717.20 508.58 L716.33 509.38 L715.63 511.01 L714.61 515.93 L713.21 520.34 L710.61 526.37 L710.25 526.84 L709.78 527.12 L709.17 527.21 L703.95 526.81 L703.40 526.62 L702.96 526.24 L701.85 522.79 L700.82 518.23 L700.28 514.35 L700.07 509.98 L699.67 508.25 L698.99 507.31 L698.00 506.70 L693.89 506.01 L693.09 506.01 L692.26 506.25 L691.58 506.67 L691.04 507.26 L690.24 508.82 L688.33 513.88 L686.02 518.35 L683.07 522.95 L682.41 523.40 L681.65 523.45 L676.45 522.26 L675.89 521.91 L675.54 521.36 L674.96 517.19 L674.69 512.87 L674.73 509.70 L675.16 505.52 L675.15 503.84 L674.63 502.41 L673.48 501.42 L669.17 500.11 L668.02 500.20 L666.99 500.73 L665.75 502.26 L662.84 507.41 L660.23 511.00 L656.48 515.32 L655.84 515.67 L655.15 515.68 L650.03 513.69 L649.52 513.27 L649.24 512.68 L649.28 508.53 L649.65 504.17 L650.16 501.03 L651.23 496.90 L651.46 495.20 L651.37 494.35 L651.03 493.54 L650.48 492.87 L649.80 492.40 L645.98 490.65 L644.81 490.63 L643.77 491.02 L642.47 492.22 L639.84 495.71 L637.21 498.61 L633.79 501.79 L630.92 504.01 L630.34 504.09 L629.78 503.93 L624.84 500.96 L624.57 500.44 L624.53 499.86 L625.75 493.48 L627.09 488.98 L629.03 484.31 L629.38 482.63 L629.15 481.49 L628.54 480.56 L624.98 478.07 L624.23 477.77 L623.43 477.68 L622.64 477.81 L621.90 478.15 L620.55 479.20 L617.54 482.16 L615.08 484.16 L611.54 486.64 L607.92 488.79 L607.26 488.86 L606.65 488.64 L602.44 485.29 L602.02 484.65 L601.97 483.89 L603.78 478.61 L605.82 474.05 L608.55 469.49 L609.25 467.96 L609.35 466.51 L608.75 465.18 L605.44 462.13 L604.36 461.71 L603.20 461.74 L601.42 462.58 L596.57 465.96 L592.65 468.07 L587.40 470.33 L586.67 470.36 L586.04 470.07 L582.30 466.06 L582.02 465.47 L582.02 464.81 L583.84 461.12 L586.09 457.33 L587.89 454.75 L590.67 451.44 L591.64 449.98 L591.91 449.15 L591.94 448.33 L591.74 447.49 L591.32 446.78 L588.64 443.55 L587.60 443.02 L586.50 442.92 L584.81 443.44 L580.92 445.44 L577.29 446.91 L572.83 448.29 L569.28 449.05 L568.73 448.87 L568.29 448.49 L565.12 443.66 L565.11 443.08 L565.32 442.53 L569.23 437.28 L572.38 433.82 L576.11 430.49 L577.14 429.16 L577.45 428.06 L577.32 426.91 L575.18 423.10 L574.64 422.51 L573.96 422.08 L573.19 421.85 L572.37 421.83 L570.71 422.19 L566.71 423.55 L563.72 424.28 L559.57 424.97 L555.27 425.37 L554.64 425.19 L554.14 424.76 L552.73 421.93 L551.66 419.58 L551.67 418.93 L551.95 418.33 L554.99 415.19 L558.07 412.43 L560.49 410.56 L564.01 408.31 L565.31 407.25 L566.09 405.97 L566.16 404.45 L564.49 400.26 L563.69 399.41 L562.65 398.94 L560.68 398.92 L554.88 399.86 L550.49 400.06 L544.68 399.82 L544.04 399.56 L543.59 399.04 L541.94 393.76 L541.95 393.11 L542.23 392.52 L545.48 389.98 L549.14 387.54 L551.88 385.99 L555.83 384.22 L557.33 383.32 L557.91 382.74 L558.32 381.99 L558.50 381.13 L558.44 380.31 L557.42 376.23 L556.72 375.30 L555.76 374.74 L554.01 374.47 L549.64 374.58 L545.74 374.33 L541.12 373.64 L537.59 372.79 L537.17 372.38 L536.94 371.85 L536.18 366.13 L536.43 365.60 L536.85 365.20 L542.61 362.18 L546.96 360.43 L551.81 359.03 L553.34 358.25 L554.07 357.41 L554.44 356.31 L554.17 351.97 L553.94 351.20 L553.51 350.52 L552.92 349.98 L552.19 349.61 L550.53 349.21 L546.37 348.70 L543.43 348.08 L539.50 346.94 L535.41 345.45Z" fill="#c8c8c8" stroke="#000" stroke-width="1"/>
 <path d="M399.15 344.09 L398.66 343.55 L398.49 342.83 L398.51 339.94 L398.70 339.39 L399.06 338.98 L403.70 336.22 L408.31 334.30 L412.13 333.42 L413.75 333.31 L416.08 333.46 L417.29 333.13 L418.11 332.51 L418.67 331.66 L419.44 328.31 L419.35 326.84 L418.58 325.60 L417.71 325.01 L414.75 323.81 L412.06 321.97 L409.01 319.08 L406.13 315.51 L404.59 313.18 L404.39 312.52 L404.49 311.88 L405.75 309.11 L406.50 308.54 L408.46 308.21 L411.71 307.89 L414.79 307.85 L417.69 308.09 L420.30 308.61 L422.07 309.19 L424.00 310.22 L424.97 310.55 L426.28 310.48 L427.44 309.85 L429.77 306.72 L430.07 305.75 L430.03 304.72 L429.47 303.50 L427.70 301.76 L426.56 300.26 L425.50 298.44 L424.54 296.38 L423.52 293.53 L422.71 290.39 L422.15 287.16 L422.36 286.25 L424.81 283.98 L425.38 283.75 L425.97 283.76 L431.10 285.37 L435.59 287.52 L438.77 289.74 L439.94 290.87 L441.39 292.71 L442.44 293.39 L443.43 293.58 L444.40 293.44 L447.40 291.79 L448.46 290.76 L448.90 289.30 L448.75 288.26 L447.66 285.23 L447.23 281.97 L447.35 277.74 L448.09 273.19 L448.76 270.60 L449.15 269.98 L449.67 269.65 L452.61 268.73 L453.52 268.93 L455.19 270.26 L457.54 272.42 L459.58 274.64 L461.33 276.96 L462.68 279.22 L463.42 280.91 L463.95 283.04 L464.36 283.99 L465.28 284.91 L466.53 285.35 L470.41 284.99 L471.34 284.56 L472.08 283.84 L472.60 282.61 L472.71 280.13 L473.07 278.28 L473.71 276.27 L474.60 274.18 L476.04 271.51 L477.82 268.81 L479.85 266.23 L480.67 265.78 L483.99 266.09 L484.52 266.33 L484.93 266.80 L487.18 271.69 L488.58 276.46 L489.06 280.31 L489.00 281.94 L488.60 284.24 L488.80 285.48 L489.32 286.35 L490.07 286.97 L493.32 288.11 L494.79 288.20 L496.16 287.55 L496.84 286.74 L498.31 283.96 L500.36 281.54 L503.46 278.85 L507.20 276.39 L509.94 274.95 L510.57 274.80 L511.25 274.95 L513.70 276.36 L514.29 277.04 L514.46 278.10 L514.52 281.83 L514.25 285.32 L513.71 288.28 L512.93 290.90 L512.14 292.68 L510.86 294.59 L510.44 295.53 L510.39 296.80 L510.89 298.00 L513.76 300.65 L514.70 301.05 L515.73 301.12 L517.00 300.68 L518.92 299.11 L520.52 298.14 L522.44 297.27 L524.60 296.53 L527.54 295.81 L530.74 295.33 L534.01 295.11 L534.90 295.42 L536.90 298.09 L537.07 298.69 L537.00 299.27 L534.86 304.21 L532.26 308.45 L529.71 311.37 L528.46 312.42 L526.49 313.67 L525.70 314.64 L525.41 315.61 L525.44 316.59 L526.77 319.76 L527.73 320.94 L529.09 321.50 L530.14 321.46 L533.23 320.69 L536.43 320.60 L540.56 321.13 L544.92 322.29 L547.70 323.32 L548.23 323.70 L548.55 324.32 L549.15 327.15 L548.94 328.10 L547.97 329.16 L545.38 331.52 L542.73 333.52 L540.22 335.07 L537.77 336.22 L535.96 336.80 L533.69 337.13 L532.71 337.45 L531.70 338.31 L531.17 339.46 L531.13 343.34 L531.46 344.32 L532.09 345.12 L533.27 345.77 L535.73 346.14 L537.52 346.68 L539.42 347.52 L541.41 348.62 L543.87 350.29 L546.32 352.29 L548.79 354.69 L549.15 355.52 L548.52 358.79 L548.21 359.32 L547.70 359.68 L542.60 361.40 L537.71 362.31 L533.83 362.37 L532.22 362.14 L529.97 361.51 L528.72 361.58 L527.80 362.01 L527.10 362.68 L525.63 365.80 L525.41 366.56 L525.40 367.32 L525.94 368.75 L526.66 369.47 L529.10 371.08 L531.07 373.06 L533.28 376.05 L535.26 379.58 L537.07 384.09 L536.90 384.91 L535.72 386.57 L534.93 387.55 L534.12 387.88 L531.08 387.70 L528.07 387.29 L524.57 386.46 L521.48 385.33 L519.35 384.19 L517.24 382.49 L516.32 382.00 L515.57 381.87 L514.78 381.93 L513.45 382.59 L510.93 384.94 L510.47 385.86 L510.35 386.87 L510.68 388.08 L511.96 390.01 L512.68 391.46 L513.82 395.18 L514.47 400.12 L514.41 405.50 L514.23 406.09 L513.82 406.55 L510.90 408.17 L510.00 408.08 L506.96 406.47 L504.29 404.76 L501.95 402.94 L500.29 401.39 L498.89 399.81 L497.83 398.28 L496.71 396.06 L495.75 395.16 L494.78 394.80 L493.81 394.78 L490.12 396.00 L489.15 396.88 L488.64 398.10 L488.63 399.11 L489.04 401.54 L488.99 403.79 L488.52 406.83 L487.61 410.09 L486.39 413.24 L484.87 416.30 L484.20 416.85 L483.03 417.04 L480.93 417.24 L480.13 417.00 L478.91 415.62 L477.20 413.30 L475.09 409.80 L473.57 406.34 L472.82 403.59 L472.64 400.66 L472.37 399.66 L471.95 398.99 L471.39 398.48 L469.98 397.93 L466.54 397.65 L465.60 397.92 L464.77 398.50 L464.09 399.55 L463.52 401.80 L462.92 403.30 L460.92 406.64 L457.69 410.43 L453.65 413.99 L453.08 414.24 L452.46 414.25 L449.31 413.16 L448.78 412.44 L447.94 409.10 L447.43 405.97 L447.21 403.01 L447.25 400.74 L447.48 398.64 L447.91 396.83 L448.82 394.52 L448.84 393.20 L448.49 392.29 L447.82 391.50 L444.39 389.56 L443.07 389.45 L441.88 389.89 L441.12 390.58 L439.69 392.39 L438.23 393.70 L435.95 395.27 L433.28 396.70 L429.92 398.07 L426.31 399.15 L425.42 399.26 L424.63 398.88 L422.57 397.01 L422.21 396.42 L422.16 395.77 L422.70 392.61 L423.88 388.36 L425.48 384.59 L427.14 381.91 L429.33 379.66 L429.88 378.79 L430.08 377.32 L429.53 375.90 L427.45 373.16 L426.62 372.64 L425.63 372.41 L424.39 372.61 L422.34 373.69 L420.83 374.24 L417.00 374.99 L412.03 375.13 L406.68 374.51 L406.11 374.26 L405.71 373.83 L404.40 370.77 L404.57 369.85 L406.39 367.12 L408.41 364.59 L410.50 362.40 L412.22 360.91 L413.92 359.69 L415.58 358.77 L417.91 357.89 L418.92 357.01 L419.37 356.10 L419.49 355.08 L418.64 351.27 L417.82 350.22 L416.66 349.63 L415.62 349.54 L413.55 349.69 L411.97 349.56 L409.65 349.09 L407.19 348.31 L403.19 346.53 L399.15 344.09Z" fill="#c9d2dc" stroke="#000" stroke-width="1"/>
 <path d="M461 341.5 H488 M474.5 329 V355" stroke="#000" stroke-width="1"/>
 <path d="M708 341.5 H734 M720.5 329 V355" stroke="#000" stroke-width="1"/>
</svg>

<!-- bottom controls -->
<div class="lbl" style="left:233px;top:558px">Drehwinkel [°]</div>
<div class="btn bw" style="left:197px;top:574px;width:48px;height:24px"></div>
<div class="field" style="left:248px;top:574px;width:48px;height:24px;line-height:22px">4.0</div>
<div class="btn bw" style="left:299px;top:574px;width:48px;height:24px"></div>
<div class="lbl" style="left:249px;top:613px">Rotation</div>
<div class="btn bw" style="left:197px;top:629px;width:48px;height:24px"></div>
<div class="btn bb" style="left:248px;top:629px;width:47px;height:24px"><div class="bt" style="left:7px;color:#808080">Stopp</div></div>
<div class="btn bw" style="left:299px;top:629px;width:48px;height:24px"></div>

<div class="lbl" style="left:410px;top:558px">Zahndickenabmaß [µm]</div>
<div class="lbl" style="left:367px;top:578px">Rad 1</div>
<div class="lbl" style="left:367px;top:603px">Rad 2</div>
<div class="sb" style="left:412px;top:574px"></div><div class="sb" style="left:432px;top:574px"></div><div class="sb" style="left:452px;top:574px"></div>
<div class="field" style="left:482px;top:574px;width:50px;height:20px">-69.0</div>
<div class="sb" style="left:412px;top:599px"></div><div class="sb" style="left:432px;top:599px"></div><div class="sb" style="left:452px;top:599px"></div>
<div class="field" style="left:482px;top:599px;width:50px;height:20px">-120.0</div>

<div class="lbl" style="left:557px;top:558px">Kopfkreisabmaß [µm]</div>
<div class="sb" style="left:557px;top:574px"></div><div class="sb" style="left:577px;top:574px"></div><div class="sb" style="left:597px;top:574px"></div>
<div class="field" style="left:622px;top:574px;width:50px;height:20px">0.0</div>
<div class="sb" style="left:557px;top:599px"></div><div class="sb" style="left:577px;top:599px"></div><div class="sb" style="left:597px;top:599px"></div>
<div class="field" style="left:622px;top:599px;width:50px;height:20px">0.0</div>
<div class="lbl" style="left:372px;top:637px">Achsabstandsabmaß A<sub style="font-size:9.5px;vertical-align:-6px;line-height:0;margin-left:0.5px">a</sub> [µm]</div>
<div class="sb" style="left:557px;top:634px"></div><div class="sb" style="left:577px;top:634px"></div><div class="sb" style="left:597px;top:634px"></div>
<div class="field" style="left:622px;top:634px;width:50px;height:20px">0.0</div>

<svg class="a" style="left:0;top:0" width="1000" height="750" viewBox="0 0 1000 750">
 <path d="M221.6 589.6 A4 4 0 1 0 220.2 583 L217.3 585.9" fill="none" stroke="#8c8c8c" stroke-width="3.3"/>
 <path d="M221.6 589.6 A4 4 0 1 0 220.2 583 L217.3 585.9" fill="none" stroke="#e2e2e2" stroke-width="1.5"/>
 <path d="M214.3 582.1 V588.8 H221 Z" fill="#e4e4e4" stroke="#8c8c8c" stroke-width="0.9"/>
 <path d="M214.3 588.6 H221" stroke="#5a5a5a" stroke-width="1.1"/>
 <path d="M322 589.6 A4 4 0 1 1 323.4 583 L326.3 585.9" fill="none" stroke="#8c8c8c" stroke-width="3.3"/>
 <path d="M322 589.6 A4 4 0 1 1 323.4 583 L326.3 585.9" fill="none" stroke="#e2e2e2" stroke-width="1.5"/>
 <path d="M329.5 582.1 V588.8 H322.8 Z" fill="#e4e4e4" stroke="#8c8c8c" stroke-width="0.9"/>
 <path d="M329.5 588.6 H322.8" stroke="#5a5a5a" stroke-width="1.1"/>
 <path d="M221.6 644.6 A4 4 0 1 0 220.2 638 L217.3 640.9" fill="none" stroke="#8c8c8c" stroke-width="3.3"/>
 <path d="M221.6 644.6 A4 4 0 1 0 220.2 638 L217.3 640.9" fill="none" stroke="#e2e2e2" stroke-width="1.5"/>
 <path d="M214.3 637.1 V643.8 H221 Z" fill="#e4e4e4" stroke="#8c8c8c" stroke-width="0.9"/>
 <path d="M214.3 643.6 H221" stroke="#5a5a5a" stroke-width="1.1"/>
 <path d="M322 644.6 A4 4 0 1 1 323.4 638 L326.3 640.9" fill="none" stroke="#8c8c8c" stroke-width="3.3"/>
 <path d="M322 644.6 A4 4 0 1 1 323.4 638 L326.3 640.9" fill="none" stroke="#e2e2e2" stroke-width="1.5"/>
 <path d="M329.5 637.1 V643.8 H322.8 Z" fill="#e4e4e4" stroke="#8c8c8c" stroke-width="0.9"/>
 <path d="M329.5 643.6 H322.8" stroke="#5a5a5a" stroke-width="1.1"/>
 <path d="M425.8 579.5 L418.8 584.5 L425.8 589.5" fill="none" stroke="#909090" stroke-width="2.4"/>
 <path d="M425.8 579.5 L418.8 584.5 L425.8 589.5" fill="none" stroke="#ebebeb" stroke-width="0.9"/>
 <path d="M438.3 584.3 H449" stroke="#9a9a9a" stroke-width="1.4"/>
 <path d="M440 585.8 H449" stroke="#fafafa" stroke-width="1.1"/>
 <path d="M458.3 579.5 L465.5 584.5 L458.3 589.5" fill="none" stroke="#909090" stroke-width="2.4"/>
 <path d="M458.3 579.5 L465.5 584.5 L458.3 589.5" fill="none" stroke="#ebebeb" stroke-width="0.9"/>
 <path d="M425.8 604.5 L418.8 609.5 L425.8 614.5" fill="none" stroke="#909090" stroke-width="2.4"/>
 <path d="M425.8 604.5 L418.8 609.5 L425.8 614.5" fill="none" stroke="#ebebeb" stroke-width="0.9"/>
 <path d="M438.3 609.3 H449" stroke="#9a9a9a" stroke-width="1.4"/>
 <path d="M440 610.8 H449" stroke="#fafafa" stroke-width="1.1"/>
 <path d="M458.3 604.5 L465.5 609.5 L458.3 614.5" fill="none" stroke="#909090" stroke-width="2.4"/>
 <path d="M458.3 604.5 L465.5 609.5 L458.3 614.5" fill="none" stroke="#ebebeb" stroke-width="0.9"/>
 <path d="M570.8 579.5 L563.8 584.5 L570.8 589.5" fill="none" stroke="#909090" stroke-width="2.4"/>
 <path d="M570.8 579.5 L563.8 584.5 L570.8 589.5" fill="none" stroke="#ebebeb" stroke-width="0.9"/>
 <path d="M583.3 584.3 H594" stroke="#9a9a9a" stroke-width="1.4"/>
 <path d="M585 585.8 H594" stroke="#fafafa" stroke-width="1.1"/>
 <path d="M603.3 579.5 L610.5 584.5 L603.3 589.5" fill="none" stroke="#909090" stroke-width="2.4"/>
 <path d="M603.3 579.5 L610.5 584.5 L603.3 589.5" fill="none" stroke="#ebebeb" stroke-width="0.9"/>
 <path d="M570.8 604.5 L563.8 609.5 L570.8 614.5" fill="none" stroke="#909090" stroke-width="2.4"/>
 <path d="M570.8 604.5 L563.8 609.5 L570.8 614.5" fill="none" stroke="#ebebeb" stroke-width="0.9"/>
 <path d="M583.3 609.3 H594" stroke="#9a9a9a" stroke-width="1.4"/>
 <path d="M585 610.8 H594" stroke="#fafafa" stroke-width="1.1"/>
 <path d="M603.3 604.5 L610.5 609.5 L603.3 614.5" fill="none" stroke="#909090" stroke-width="2.4"/>
 <path d="M603.3 604.5 L610.5 609.5 L603.3 614.5" fill="none" stroke="#ebebeb" stroke-width="0.9"/>
 <path d="M570.8 639.5 L563.8 644.5 L570.8 649.5" fill="none" stroke="#909090" stroke-width="2.4"/>
 <path d="M570.8 639.5 L563.8 644.5 L570.8 649.5" fill="none" stroke="#ebebeb" stroke-width="0.9"/>
 <path d="M583.3 644.3 H594" stroke="#9a9a9a" stroke-width="1.4"/>
 <path d="M585 645.8 H594" stroke="#fafafa" stroke-width="1.1"/>
 <path d="M603.3 639.5 L610.5 644.5 L603.3 649.5" fill="none" stroke="#909090" stroke-width="2.4"/>
 <path d="M603.3 639.5 L610.5 644.5 L603.3 649.5" fill="none" stroke="#ebebeb" stroke-width="0.9"/>
 </svg>
<div class="lbl" style="left:712px;top:560px">Darstellung der Zahnform</div>
<div class="cb" style="left:716px;top:583px"></div>
<div class="lbl" style="left:733.5px;top:583px;color:#6c7075">mit Bearbeitungszugabe</div>
<div class="cb" style="left:716px;top:608px"></div>
<div class="lbl" style="left:733.5px;top:608px;color:#6c7075">mit Bearbeitungszugabe</div>
<div id="frame"></div>
</div>
</body></html>
